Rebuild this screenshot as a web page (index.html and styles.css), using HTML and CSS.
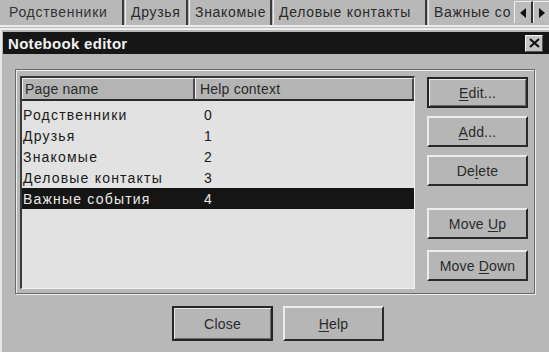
FILE: index.html
```html
<!DOCTYPE html>
<html>
<head>
<meta charset="utf-8">
<link rel="stylesheet" href="styles.css">
</head>
<body>
<div class="tabs">
  <div class="tab active t1"><span class="cy">Родственники</span></div>
  <div class="tab t2"><span class="cy">Друзья</span></div>
  <div class="tab t3"><span class="cy">Знакомые</span></div>
  <div class="tab t4"><span class="cy">Деловые контакты</span></div>
  <div class="tab t5"><span class="cy">Важные со</span></div>
  <div class="arrow"><span class="tri left"></span></div>
  <div class="arrow"><span class="tri right"></span></div>
</div>
<div class="dialog">
  <div class="titlebar">
    <span class="title">Notebook editor</span>
    <span class="xbtn">
      <svg width="11" height="10" viewBox="0 0 11 10"><path d="M1 1 L10 9 M10 1 L1 9" stroke="#111" stroke-width="2.2"/></svg>
    </span>
  </div>
  <div class="content">
    <div class="group">
      <div class="list">
        <div class="head">
          <div class="hcell c1">Page name</div>
          <div class="hcell c2">Help context</div>
        </div>
        <div class="row"><span class="c1 cy">Родственники</span><span class="c2">0</span></div>
        <div class="row"><span class="c1 cy">Друзья</span><span class="c2">1</span></div>
        <div class="row"><span class="c1 cy">Знакомые</span><span class="c2">2</span></div>
        <div class="row"><span class="c1 cy">Деловые контакты</span><span class="c2">3</span></div>
        <div class="row sel"><span class="c1 cy">Важные события</span><span class="c2">4</span></div>
      </div>
      <div class="side">
        <div class="btn default"><span><u>E</u>dit...</span></div>
        <div class="btn"><span><u>A</u>dd...</span></div>
        <div class="btn"><span>De<u>l</u>ete</span></div>
        <div class="btn up"><span>Move <u>U</u>p</span></div>
        <div class="btn down"><span>Move <u>D</u>own</span></div>
      </div>
    </div>
    <div class="bottom">
      <div class="btn big default"><span>Close</span></div>
      <div class="btn big"><span><u>H</u>elp</span></div>
    </div>
  </div>
</div>
</body>
</html>
```
FILE: styles.css
```css
* { box-sizing: border-box; }
html, body {
  margin: 0;
  width: 549px;
  height: 352px;
  overflow: hidden;
}
body {
  background: #b8b8b8;
  font-family: "Liberation Sans", Arial, sans-serif;
  font-size: 14px;
  color: #1c1c1c;
  letter-spacing: 0.2px;
}
.cy { letter-spacing: 1.2px; }

.tabs {
  display: flex;
  height: 27px;
  border-bottom: 2px solid #ececec;
  overflow: hidden;
}
.tab {
  flex: none;
  height: 25px;
  padding: 0 0 2px 5px;
  display: flex;
  align-items: center;
  border-left: 1px solid #ececec;
  border-right: 2px solid #3a3a3a;
  margin-right: 1px;
  white-space: nowrap;
  overflow: hidden;
  color: #2a2a2a;
}
.tab .cy { letter-spacing: 0.7px; }
.tab.t1 { width: 124px; border-left: none; padding-left: 9px; color: #333; }
.tab.t2 { width: 63px; }
.tab.t3 { width: 83px; }
.tab.t4 { width: 154px; }
.tab.t5 { width: 86px; border-right: none; margin-right: 0; }
.arrow {
  flex: none;
  width: 19px;
  height: 22px;
  margin-top: 1px;
  background: #bcbcbc;
  border-left: 1px solid #f0f0f0;
  border-right: 2px solid #333;
  border-top: 1px solid #f0f0f0;
  display: flex;
  align-items: center;
  justify-content: center;
}
.tri { width: 0; height: 0; border-top: 5px solid transparent; border-bottom: 5px solid transparent; }
.tri.left { border-right: 6px solid #111; }
.tri.right { border-left: 6px solid #111; }

.dialog {
  margin-top: 1px;
  border-top: 2px solid #eeeeee;
  border-left: 2px solid #e8e8e8;
  padding: 2px 0 0 1px;
  height: 325px;
}
.titlebar {
  height: 22px;
  background: #161616;
  color: #f2f2f2;
  font-weight: bold;
  font-size: 15px;
  letter-spacing: 0.3px;
  display: flex;
  align-items: center;
  justify-content: space-between;
  padding-left: 5px;
}
.xbtn {
  width: 18px;
  height: 17px;
  margin-right: 6px;
  background: #c4c4c4;
  border-top: 1px solid #f4f4f4;
  border-left: 1px solid #f4f4f4;
  border-right: 1px solid #555;
  border-bottom: 1px solid #555;
  display: flex;
  align-items: center;
  justify-content: center;
}
.content {
  padding: 15px 0 0 12px;
}
.group {
  width: 520px;
  height: 225px;
  border: 1px solid #6a6a6a;
  box-shadow: inset 1px 1px 0 #ededed, 1px 1px 0 #ededed;
  display: flex;
  padding: 6px 0 4px 4px;
}
.list {
  width: 395px;
  background: #e2e2e2;
  border-top: 2px solid #3a3a3a;
  border-left: 2px solid #3a3a3a;
  border-right: 1px solid #f0f0f0;
  border-bottom: 1px solid #f0f0f0;
}
.head {
  display: flex;
  height: 23px;
  border-bottom: 2px solid #2a2a2a;
}
.hcell {
  background: #b4b4b4;
  display: flex;
  align-items: center;
  border-top: 1px solid #ededed;
  border-left: 1px solid #ededed;
  border-right: 2px solid #4a4a4a;
  color: #2a2a2a;
}
.hcell.c1 { width: 173px; padding-left: 2px; }
.hcell.c2 { flex: 1; padding-left: 4px; }
.row {
  display: flex;
  height: 21px;
  align-items: center;
  color: #1a1a1a;
}
.row:nth-child(2) { margin-top: 3px; }
.row .c1 { width: 173px; padding-left: 1px; }
.row .c2 { padding-left: 9px; }
.row.sel { background: #151515; color: #eaeaea; }

.side {
  display: flex;
  flex-direction: column;
  margin-left: 12px;
  padding-top: 1px;
}
.btn {
  width: 101px;
  height: 32px;
  background: #b6b6b6;
  border-top: 2px solid #ececec;
  border-left: 2px solid #ececec;
  border-right: 2px solid #2a2a2a;
  border-bottom: 2px solid #2a2a2a;
  display: flex;
  align-items: center;
  justify-content: center;
  color: #2a2a2a;
  margin-bottom: 8px;
}
.btn span { padding-top: 1px; }
.btn.default {
  border: 2px solid #262626;
  box-shadow: inset 1px 1px 0 #e6e6e6, inset -1px -1px 0 #6a6a6a;
}
.btn.up { margin-top: 14px; margin-bottom: 11px; }
.btn u { text-decoration-thickness: 1px; text-underline-offset: 2px; }

.bottom {
  display: flex;
  gap: 10px;
  padding: 12px 0 0 157px;
}
.btn.big { height: 35px; margin-bottom: 0; }
```
